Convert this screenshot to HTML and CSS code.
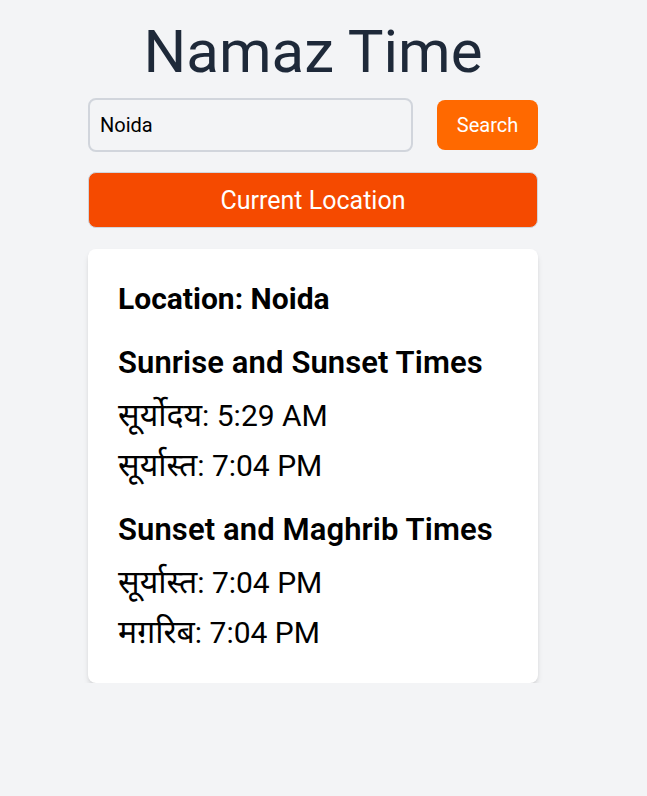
FILE: index.html
```html
<!DOCTYPE html>
<html lang="en">
<head>
<meta charset="utf-8">
<title>Namaz Time</title>
<link rel="stylesheet" href="styles.css">
</head>
<body>
<main class="wrap">
  <h1 class="title">Namaz Time</h1>
  <div class="search-row">
    <input class="city-input" type="text" value="Noida">
    <button class="btn-search">Search</button>
  </div>
  <button class="btn-location">Current Location</button>
  <section class="card">
    <h2 class="loc">Location: Noida</h2>
    <div class="group">
      <h3 class="group-title">Sunrise and Sunset Times</h3>
      <p class="time"><span class="hi">सूर्योदय</span>: 5:29 AM</p>
      <p class="time"><span class="hi">सूर्यास्त</span>: 7:04 PM</p>
    </div>
    <div class="group group-2">
      <h3 class="group-title">Sunset and Maghrib Times</h3>
      <p class="time"><span class="hi">सूर्यास्त</span>: 7:04 PM</p>
      <p class="time"><span class="hi">मग़रिब</span>: 7:04 PM</p>
    </div>
  </section>
</main>
</body>
</html>
```
FILE: styles.css
```css
html, body {
  margin: 0;
  padding: 0;
  background: #f3f4f6;
  font-family: Roboto, "Noto Sans", sans-serif;
}
.wrap {
  width: 450px;
  margin-left: 88px;
  padding-top: 22px;
}
.title {
  margin: 0 0 16px;
  font-size: 60px;
  line-height: 60px;
  font-weight: 400;
  color: #1e2939;
  text-align: center;
}
.search-row {
  display: flex;
  align-items: center;
  gap: 24px;
}
.city-input {
  flex: 1;
  box-sizing: border-box;
  height: 54px;
  margin: 0;
  padding: 0 10px;
  border: 2px solid #d1d5dc;
  border-radius: 8px;
  background: #f3f4f6;
  font-family: Roboto, sans-serif;
  font-size: 20px;
  color: #000;
  outline: none;
}
.btn-search {
  box-sizing: border-box;
  width: 101px;
  height: 50px;
  margin: 0;
  padding: 0;
  border: none;
  border-radius: 8px;
  background: #ff6900;
  color: #fff;
  font-family: Roboto, sans-serif;
  font-size: 20px;
}
.btn-location {
  display: block;
  box-sizing: border-box;
  width: 100%;
  height: 56px;
  margin: 20px 0 0;
  padding: 0;
  border: 1px solid #d1d5dc;
  border-radius: 8px;
  background: #f54a00;
  color: #fff;
  font-family: Roboto, sans-serif;
  font-size: 25px;
}
.card {
  margin-top: 21px;
  padding: 32px 30px 25px;
  background: #fff;
  border-radius: 8px;
  box-shadow: 0 4px 6px -1px rgba(0,0,0,0.12), 0 2px 4px -2px rgba(0,0,0,0.12);
}
.loc {
  margin: 0;
  font-size: 30px;
  line-height: 36px;
  font-weight: 700;
  color: #000;
}
.group {
  margin-top: 28px;
}
.group-2 {
  margin-top: 21px;
}
.group-title {
  margin: 0 0 10px;
  font-size: 31px;
  line-height: 36px;
  font-weight: 600;
  letter-spacing: 0.1px;
  color: #000;
}
.time {
  margin: 0;
  font-size: 30px;
  line-height: 50px;
  color: #000;
}
.hi {
  font-size: 32px;
  line-height: 30px;
}
```
